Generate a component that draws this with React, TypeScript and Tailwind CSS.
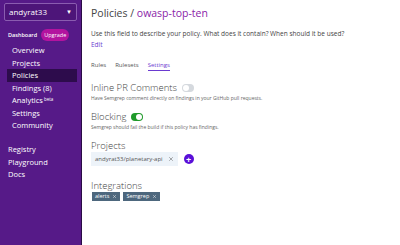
import { X } from "lucide-react";

const nav = ["Overview", "Projects", "Policies", "Findings (8)", "Analytics", "Settings", "Community"];

function Toggle({ on }: { on: boolean }) {
  return (
    <span
      className={
        "inline-flex h-[8px] w-[12px] items-center rounded-full px-[1px] " +
        (on ? "bg-[#1f9a2a] justify-end" : "bg-[#d5d9de] justify-start")
      }
    >
      <span className="h-[6px] w-[6px] rounded-full bg-white" />
    </span>
  );
}

export default function App() {
  return (
    <div className="flex h-[245px] w-[400px] bg-white font-['Open_Sans',sans-serif] text-[#333]">
      <aside className="flex w-[82px] flex-col border-r border-[#2a0b45] bg-[#561a88] px-[4px] pt-[3px] text-white">
        <div className="flex h-[18px] items-center justify-between rounded-[2px] border border-[#8a5cb0] bg-[#4d1579] px-[4px] text-[8px]">
          <span>andyrat33</span>
          <span className="text-[6px]">▼</span>
        </div>
        <div className="mt-[8px] flex items-center gap-[4px] pl-[4px]">
          <span className="text-[5.5px] font-semibold">Dashboard</span>
          <span className="rounded-full bg-[#b3139f] px-[3px] py-[2px] text-[5.5px]">Upgrade</span>
        </div>
        <ul className="mt-[3px] flex flex-col pl-[3px] text-[7.5px]">
          {nav.map((n) => (
            <li
              key={n}
              className={
                "flex h-[12.6px] items-center pl-[5px] " + (n === "Policies" ? "bg-[#2d0c4c]" : "")
              }
            >
              {n}
              {n === "Analytics" && <sup className="ml-[1px] text-[4.5px]">beta</sup>}
            </li>
          ))}
        </ul>
        <ul className="mt-[11px] flex flex-col text-[7.5px]">
          {["Registry", "Playground", "Docs"].map((n) => (
            <li key={n} className="flex h-[12.6px] items-center pl-[4px]">
              {n}
            </li>
          ))}
        </ul>
      </aside>
      <main className="flex-1 pl-[9px] pt-[6px]">
        <h1 className="text-[10.5px] leading-[14px] text-[#444]">
          Policies / <span className="text-[#8a24a8]">owasp-top-ten</span>
        </h1>
        <p className="mt-[10px] text-[6.5px] leading-[8px] text-[#444]">
          Use this field to describe your policy. What does it contain? When should it be used?
        </p>
        <p className="mt-[3px] text-[6.5px] leading-[8px] text-[#6a3ad0]">Edit</p>
        <div className="mt-[12px] flex gap-[9px] text-[6px] leading-[8px] text-[#555]">
          <span>Rules</span>
          <span>Rulesets</span>
          <span className="border-b border-[#6a3ad0] pb-[1px] text-[#6a3ad0]">Settings</span>
        </div>
        <div className="mt-[11px] flex h-[12px] items-center gap-[5px] text-[9.5px] font-light text-[#444]">
          Inline PR Comments <Toggle on={false} />
        </div>
        <p className="text-[5px] leading-[8px] text-[#666]">
          Have Semgrep comment directly on findings in your GitHub pull requests.
        </p>
        <div className="mt-[9px] flex h-[12px] items-center gap-[5px] text-[9.5px] font-light text-[#444]">
          Blocking <Toggle on={true} />
        </div>
        <p className="text-[5px] leading-[8px] text-[#666]">Semgrep should fail the build if this policy has findings.</p>
        <h2 className="mt-[9px] text-[9.5px] font-light leading-[12px] text-[#444]">Projects</h2>
        <div className="flex items-center gap-[6px]">
          <span className="flex h-[14px] items-center gap-[5px] bg-[#edf3f9] px-[4px] text-[6px] text-[#555]">
            andyrat33/planetary-api <X size={6} strokeWidth={2} />
          </span>
          <span className="flex h-[10px] w-[10px] items-center justify-center rounded-full bg-[#5a10d8] text-[9px] font-bold leading-none text-white">
            +
          </span>
        </div>
        <h2 className="mt-[14px] text-[9.5px] font-light leading-[12px] text-[#444]">Integrations</h2>
        <div className="flex gap-[3px] pl-[1px]">
          {["alerts", "Semgrep"].map((t) => (
            <span key={t} className="flex h-[9px] items-center gap-[3px] bg-[#4d677d] px-[3px] text-[5.5px] text-white">
              {t} <X size={5} strokeWidth={2} />
            </span>
          ))}
        </div>
      </main>
    </div>
  );
}
